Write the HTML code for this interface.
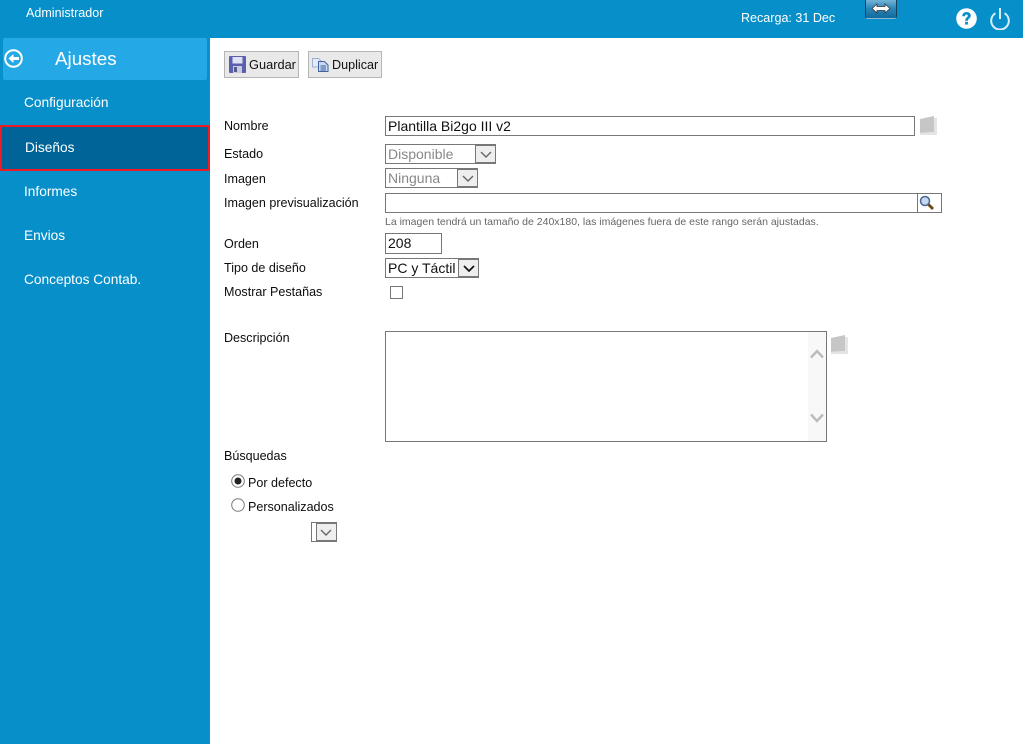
<!DOCTYPE html>
<html lang="es"><head><meta charset="utf-8"><title>Ajustes</title>
<style>
html,body{margin:0;padding:0;width:1023px;height:744px;overflow:hidden;background:#fff;font-family:"Liberation Sans",Arial,sans-serif;}
div,span{position:absolute;box-sizing:border-box;white-space:nowrap;}
svg{position:absolute;display:block;}
.t{font-size:12.55px;line-height:14px;color:#0d0d0d;}
.m{font-size:13.7px;line-height:16px;color:#fff;}
.b{border:1px solid #777;background:#fff;}
.v{font-size:14px;line-height:16px;color:#111;}
.g{color:#888;}
.arrow{background:#eee;border:1px solid #777;}
</style></head><body>
<div style="left:0;top:0;width:1023px;height:38px;background:#068fc9"></div>
<div style="left:0;top:38px;width:210px;height:706px;background:#068fc9"></div>
<div class="t" style="left:26px;top:6px;color:#fff">Administrador</div>
<div class="t" style="left:741px;top:11px;color:#fff">Recarga: 31 Dec</div>
<div style="left:865px;top:-4px;width:32px;height:23px;border:1px solid #16405c;border-bottom-color:#8fb8d0;border-radius:3px;background:linear-gradient(#8fc3e0,#2a85b8 55%,#0f6a9e)"></div>
<svg style="left:871px;top:3px" width="20" height="11" viewBox="0 0 20 11"><path d="M1 5.500 6 1V3.500H14V1L19 5.500 14 10V7.500H6V10Z" fill="#fff" stroke="#333" stroke-width=".8"/></svg>
<svg style="left:956px;top:8px" width="21" height="21" viewBox="0 0 21 21"><circle cx="10.500" cy="10.500" r="10.300" fill="#fff"/><path d="M6.300 8.200C6.300 5.500 8.300 4 10.600 4 13 4 14.800 5.500 14.800 7.600 14.800 10.200 12 10.400 12 12.700H9.200C9.200 9.500 11.800 9.300 11.800 7.900 11.800 7 11.300 6.500 10.500 6.500 9.600 6.500 9.100 7.200 9.100 8.200Z" fill="#068fc9"/><rect x="9.100" y="13.800" width="2.800" height="2.800" fill="#068fc9"/></svg>
<svg style="left:989px;top:7px" width="22" height="23" viewBox="0 0 22 23"><path d="M6.500 6.200A8.800 8.800 0 1 0 15.500 6.200" fill="none" stroke="#d8eef8" stroke-width="2"/><path d="M11 1V12" stroke="#d8eef8" stroke-width="2"/></svg>

<div style="left:3px;top:38px;width:204px;height:42px;background:#25a9e6;border-radius:2px"></div>
<svg style="left:4px;top:49px" width="20" height="20" viewBox="0 0 20 20"><circle cx="9.500" cy="9.500" r="8.300" fill="none" stroke="#fff" stroke-width="2"/><path d="M4.500 9.500 9.500 5V8H15V11H9.500V14Z" fill="#fff"/></svg>
<div style="left:55px;top:48px;font-size:18.8px;line-height:21px;color:#fff">Ajustes</div>
<div style="left:0;top:125px;width:210px;height:46px;background:#006499;border:2px solid #ed1c24"></div>
<div class="m" style="left:24px;top:95px">Configuración</div>
<div class="m" style="left:25px;top:140px">Diseños</div>
<div class="m" style="left:24px;top:184px">Informes</div>
<div class="m" style="left:24px;top:228px">Envios</div>
<div class="m" style="left:24px;top:272px">Conceptos Contab.</div>

<div style="left:224px;top:51px;width:75px;height:27px;background:#e9e9e9;border:1px solid #b5b5b5"></div>
<div class="t" style="left:249px;top:58px;color:#111;font-size:12.8px">Guardar</div>
<svg style="left:229px;top:56px" width="17" height="17" viewBox="0 0 17 17"><rect width="17" height="17" rx="1" fill="#5a5fb0"/><rect x="3.500" y="1" width="10" height="6.500" fill="#dfe2f2"/><rect x="4" y="10" width="9" height="7" fill="#c9cbd8"/><rect x="5" y="11" width="3" height="5" fill="#56598f"/></svg>
<div style="left:308px;top:51px;width:74px;height:27px;background:#e9e9e9;border:1px solid #b5b5b5"></div>
<div class="t" style="left:332px;top:58px;color:#111;font-size:12.6px">Duplicar</div>
<svg style="left:312px;top:57px" width="17" height="15" viewBox="0 0 17 15"><path d="M.5 1.500H6.500L9 4V10H.5Z" fill="#e3ebf7" stroke="#9db0d0"/><path d="M6.500 4.500H12.500L16 8V14.500H6.500Z" fill="#c8d9f2" stroke="#44639d"/><path d="M8.500 9H14M8.500 11H14M8.500 13H14" stroke="#3a5c9c"/></svg>

<div class="t" style="left:224px;top:119px">Nombre</div>
<div class="b" style="left:385px;top:116px;width:530px;height:20px"></div>
<div class="v" style="left:388px;top:118px">Plantilla Bi2go III v2</div>
<svg style="left:920px;top:116px" width="18" height="20" viewBox="0 0 18 20"><path d="M0 3 14 0V16L0 17Z" fill="#c6c6c6"/><path d="M14 2H17V19H0V17L14 16Z" fill="#e4e4e4"/></svg>

<div class="t" style="left:224px;top:147px">Estado</div>
<div class="b" style="left:385px;top:144px;width:111px;height:20px"></div>
<div class="v g" style="left:388px;top:146px">Disponible</div>
<div class="arrow" style="left:475px;top:145px;width:21px;height:18px"></div>
<svg style="left:480px;top:151px" width="12" height="7" viewBox="0 0 12 7"><path d="M1 1 6 6 11 1" fill="none" stroke="#666" stroke-width="1.400"/></svg>

<div class="t" style="left:224px;top:172px">Imagen</div>
<div class="b" style="left:385px;top:168px;width:93px;height:20px"></div>
<div class="v g" style="left:388px;top:170px">Ninguna</div>
<div class="arrow" style="left:457px;top:169px;width:21px;height:18px"></div>
<svg style="left:462px;top:175px" width="12" height="7" viewBox="0 0 12 7"><path d="M1 1 6 6 11 1" fill="none" stroke="#666" stroke-width="1.400"/></svg>

<div class="t" style="left:224px;top:196px">Imagen previsualización</div>
<div class="b" style="left:385px;top:193px;width:557px;height:20px"></div>
<div style="left:917px;top:193px;width:1px;height:20px;background:#777"></div>
<svg style="left:919px;top:195px" width="16" height="16" viewBox="0 0 16 16"><circle cx="6" cy="6" r="4.500" fill="#c4d8f2" stroke="#4a6490" stroke-width="1.500"/><path d="M9.500 9.500 14 14" stroke="#6b4a12" stroke-width="2.800"/></svg>
<div style="left:385px;top:215px;font-size:10.5px;line-height:14px;color:#666">La imagen tendrá un tamaño de 240x180, las imágenes fuera de este rango serán ajustadas.</div>

<div class="t" style="left:224px;top:237px">Orden</div>
<div class="b" style="left:385px;top:233px;width:57px;height:21px"></div>
<div class="v" style="left:388px;top:235px">208</div>

<div class="t" style="left:224px;top:261px">Tipo de diseño</div>
<div class="b" style="left:385px;top:258px;width:94px;height:20px"></div>
<div class="v" style="left:388px;top:260px">PC y Táctil</div>
<div class="arrow" style="left:458px;top:259px;width:21px;height:18px"></div>
<svg style="left:463px;top:265px" width="12" height="7" viewBox="0 0 12 7"><path d="M1 1 6 6 11 1" fill="none" stroke="#111" stroke-width="1.700"/></svg>

<div class="t" style="left:224px;top:285px">Mostrar Pestañas</div>
<div class="b" style="left:390px;top:286px;width:13px;height:13px"></div>

<div class="t" style="left:224px;top:331px">Descripción</div>
<div class="b" style="left:385px;top:331px;width:442px;height:111px"></div>
<div style="left:808px;top:332px;width:18px;height:109px;background:#f8f8f8"></div>
<svg style="left:810px;top:349px" width="14" height="10" viewBox="0 0 14 10"><path d="M1 8.500 7 2 13 8.500" fill="none" stroke="#bbb" stroke-width="2.400"/></svg>
<svg style="left:810px;top:413px" width="14" height="10" viewBox="0 0 14 10"><path d="M1 1.500 7 8 13 1.500" fill="none" stroke="#bbb" stroke-width="2.400"/></svg>
<svg style="left:831px;top:335px" width="18" height="20" viewBox="0 0 18 20"><path d="M0 3 14 0V16L0 17Z" fill="#c6c6c6"/><path d="M14 2H17V19H0V17L14 16Z" fill="#e4e4e4"/></svg>

<div class="t" style="left:224px;top:449px">Búsquedas</div>
<svg style="left:231px;top:474px" width="14" height="14" viewBox="0 0 14 14"><circle cx="7" cy="7" r="6.300" fill="#fff" stroke="#777"/><circle cx="7" cy="7" r="3.500" fill="#222"/></svg>
<div class="t" style="left:248px;top:476px">Por defecto</div>
<svg style="left:231px;top:498px" width="14" height="14" viewBox="0 0 14 14"><circle cx="7" cy="7" r="6.300" fill="#fff" stroke="#777"/></svg>
<div class="t" style="left:248px;top:500px">Personalizados</div>
<div class="b" style="left:311px;top:522px;width:26px;height:20px"></div>
<div class="arrow" style="left:316px;top:523px;width:21px;height:18px"></div>
<svg style="left:320px;top:529px" width="12" height="7" viewBox="0 0 12 7"><path d="M1 1 6 6 11 1" fill="none" stroke="#666" stroke-width="1.400"/></svg>
</body></html>
